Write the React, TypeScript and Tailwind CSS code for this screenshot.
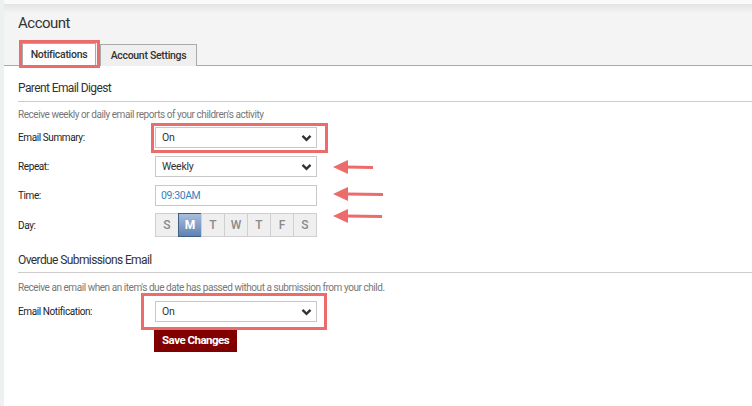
import React from 'react'

const font = { fontFamily: 'Roboto, "Liberation Sans", sans-serif' }

const Chevron = () => (
  <svg width="11" height="8" viewBox="0 0 11 8" className="shrink-0">
    <path d="M1.5 1.8 L5.5 5.8 L9.5 1.8" fill="none" stroke="#333" strokeWidth="2.4" />
  </svg>
)

const Select = ({ value }: { value: string }) => (
  <div className="flex h-[21px] w-[162px] items-center justify-between border border-[#c8c8c8] bg-white pl-[6px] pr-[4px] text-[10.5px] tracking-[-0.3px] text-[#333]">
    <span>{value}</span>
    <Chevron />
  </div>
)

const Row = ({ label, children, className = '' }: { label: string; children: React.ReactNode; className?: string }) => (
  <div className={`flex items-center ${className}`}>
    <div className="w-[137px] text-[10px] tracking-[-0.4px] text-[#222]">{label}</div>
    {children}
  </div>
)

const Arrow = ({ x, y, w }: { x: number; y: number; w: number }) => (
  <svg
    className="absolute"
    style={{ left: x, top: y - 8 }}
    width={w}
    height={16}
    viewBox={`0 0 ${w} 16`}
  >
    <polygon points="0,8 15,1 15,15" fill="#ec6b6b" />
    <line x1="13" y1="8" x2={w} y2="8.5" stroke="#ec6b6b" strokeWidth="3" />
  </svg>
)

const days = ['S', 'M', 'T', 'W', 'T', 'F', 'S']

export default function App() {
  return (
    <div className="relative flex h-[406px] w-full overflow-hidden bg-white" style={font}>
      {/* left strip */}
      <div className="w-[4px] shrink-0 bg-[#eef1f1]" />

      <div className="flex-1">
        {/* header */}
        <div className="h-[4px] bg-[#fafafa]" />
        <div className="h-[62px] bg-gradient-to-b from-[#e4e4e4] via-[#f4f4f4] via-[15%] to-[#f4f4f4] border-b border-[#aaa]">
          <div className="pl-[14px] pt-[9px] text-[15px] leading-[20px] tracking-[-0.5px] text-[#333]">Account</div>
          <div className="mt-[10px] flex pl-[18px] text-[10.5px] font-medium tracking-[-0.3px] text-[#333]">
            <div className="flex h-[23px] w-[74px] items-center justify-center border border-b-0 border-[#aaa] bg-white">
              Notifications
            </div>
            <div className="ml-[4px] mt-[1px] flex h-[22px] w-[97px] items-center justify-center border border-b-0 border-[#aaa] bg-[#efefef]">
              Account Settings
            </div>
          </div>
        </div>

        {/* content */}
        <div className="pl-[14px]">
          <div className="border-b border-[#ccc] pt-[14px] pb-[5px] text-[12px] leading-[16px] tracking-[-0.6px] text-[#333]">
            Parent Email Digest
          </div>
          <div className="mt-[6px] text-[10px] leading-[14px] tracking-[-0.45px] text-[#777]">
            Receive weekly or daily email reports of your children's activity
          </div>

          <Row label="Email Summary:" className="mt-[5px]">
            <Select value="On" />
          </Row>
          <Row label="Repeat:" className="mt-[8px]">
            <Select value="Weekly" />
          </Row>
          <Row label="Time:" className="mt-[8px]">
            <div className="flex h-[21px] w-[162px] items-center border border-[#c8c8c8] bg-white pl-[5px] text-[10.5px] tracking-[-0.4px] text-[#3a7fc0]">
              09:30AM
            </div>
          </Row>
          <Row label="Day:" className="mt-[7px]">
            <div className="flex h-[24px]">
              {days.map((d, i) =>
                i === 1 ? (
                  <div
                    key={i}
                    className="-ml-px flex w-[24px] items-center justify-center border border-[#3e5e86] bg-gradient-to-b from-[#a9bfdc] to-[#5f82b2] text-[12px] font-bold text-white"
                  >
                    {d}
                  </div>
                ) : (
                  <div
                    key={i}
                    className={`${i === 0 ? '' : '-ml-px'} flex w-[24px] items-center justify-center border border-[#cfcfcf] bg-[#efefef] text-[12px] font-medium text-[#8a8a8a]`}
                  >
                    {d}
                  </div>
                )
              )}
            </div>
          </Row>

          <div className="mt-[15px] border-b border-[#ccc] pb-[4px] text-[12px] leading-[16px] tracking-[-0.6px] text-[#333]">
            Overdue Submissions Email
          </div>
          <div className="mt-[8px] text-[10px] leading-[14px] tracking-[-0.45px] text-[#777]">
            Receive an email when an item's due date has passed without a submission from your child.
          </div>
          <Row label="Email Notification:" className="mt-[6px]">
            <Select value="On" />
          </Row>
          <div className="mt-[5px] pl-[136px]">
            <button className="h-[22px] bg-[#800000] px-[8px] text-[11.5px] font-bold tracking-[-0.5px] text-white">
              Save Changes
            </button>
          </div>
        </div>
      </div>

      {/* annotations */}
      <div className="pointer-events-none absolute left-[19px] top-[40px] h-[28px] w-[81px] border-[3px] border-[#ec6b6b]" />
      <div className="pointer-events-none absolute left-[151px] top-[123px] h-[30px] w-[177px] border-[3px] border-[#ec6b6b]" />
      <div className="pointer-events-none absolute left-[141px] top-[293px] h-[37px] w-[186px] border-[3px] border-[#ec6b6b]" />
      <Arrow x={333} y={167} w={40} />
      <Arrow x={333} y={194} w={50} />
      <Arrow x={333} y={216} w={49} />
    </div>
  )
}
